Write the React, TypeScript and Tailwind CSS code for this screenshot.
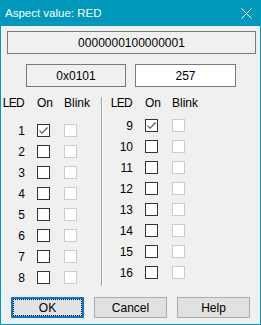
import React from 'react';

const font = { fontFamily: '"Liberation Sans", Arial, sans-serif' };

function Check({ checked, disabled }: { checked?: boolean; disabled?: boolean }) {
  return (
    <span
      className={
        'block w-[13px] h-[13px] shrink-0 bg-white border ' +
        (disabled ? 'border-[#cccccc]' : 'border-[#333333]')
      }
    >
      {checked && (
        <svg width="11" height="11" viewBox="0 0 11 11" className="block">
          <polyline points="1.5,5.5 4,8.3 9.5,2.5" fill="none" stroke="#444" strokeWidth="1.1" />
        </svg>
      )}
    </span>
  );
}

function LedColumn({ start, numW, top }: { start: number; numW: string; top: string }) {
  const rows = Array.from({ length: 8 }, (_, i) => start + i);
  return (
    <div className="flex flex-col">
      <div className="flex h-[14px] leading-[14px] text-[12px] text-black">
        <span className={numW + ' text-right tracking-[-0.7px] pr-[1px]'}>LED</span>
        <span className="ml-[12px] w-[27px]">On</span>
        <span>Blink</span>
      </div>
      <div className={'flex flex-col ' + top}>
        {rows.map((n) => (
          <div key={n} className="flex items-center h-[21px] text-[12px] text-black">
            <span className={numW + ' text-right leading-[14px]'}>{n}</span>
            <span className="ml-[12px]">
              <Check checked={n === 1 || n === 9} />
            </span>
            <span className="ml-[14px]">
              <Check disabled />
            </span>
          </div>
        ))}
      </div>
    </div>
  );
}

function Button({ label, primary }: { label: string; primary?: boolean }) {
  if (primary) {
    return (
      <button className="flex w-[73px] h-[21px] border-2 border-[#0078d7] bg-[#e1e1e1] p-0">
        <span className="flex flex-1 items-center justify-center border border-dotted border-black text-[12px] text-black">
          {label}
        </span>
      </button>
    );
  }
  return (
    <button className="flex items-center justify-center w-[73px] h-[21px] border border-[#adadad] bg-[#e1e1e1] text-[12px] text-black p-0">
      {label}
    </button>
  );
}

export default function App() {
  return (
    <div style={font} className="w-[261px] h-[325px] border border-[#0099bc] bg-[#f0f0f0] flex flex-col overflow-hidden">
      <div className="h-[25px] bg-[#0099bc] flex items-center shrink-0">
        <span className="ml-[4px] text-[11.5px] text-white">Aspect value: RED</span>
        <svg width="11" height="11" viewBox="0 0 11 11" className="ml-auto mr-[8px]">
          <path d="M0.5 0.5 L10.5 10.5 M10.5 0.5 L0.5 10.5" stroke="white" strokeWidth="1" />
        </svg>
      </div>

      <div className="ml-[6px] mt-[5px] w-[249px] h-[23px] border border-[#7a7a7a] bg-[#f0f0f0] flex items-center justify-center text-[12px] text-black">
        0000000100000001
      </div>

      <div className="flex mt-[10px] ml-[25px] gap-[9px]">
        <div className="w-[100px] h-[23px] border border-[#7a7a7a] bg-[#f0f0f0] flex items-center justify-center text-[12px] text-black">
          0x0101
        </div>
        <div className="w-[101px] h-[23px] border border-[#7a7a7a] bg-white flex items-center justify-center text-[12px] text-black">
          257
        </div>
      </div>

      <div className="flex mt-[9px] h-[189px]">
        <div className="w-[100px]">
          <LedColumn start={1} numW="w-[24px]" top="mt-[10px]" />
        </div>
        <div className="mt-[1px] h-[189px] w-[2px] border-l border-[#a0a0a0] border-r border-r-white" />
        <div className="ml-[1px]">
          <LedColumn start={9} numW="w-[29px]" top="mt-[5px]" />
        </div>
      </div>

      <div className="flex ml-[10px] mt-[12px] gap-[10px]">
        <Button label="OK" primary />
        <Button label="Cancel" />
        <Button label="Help" />
      </div>
    </div>
  );
}
